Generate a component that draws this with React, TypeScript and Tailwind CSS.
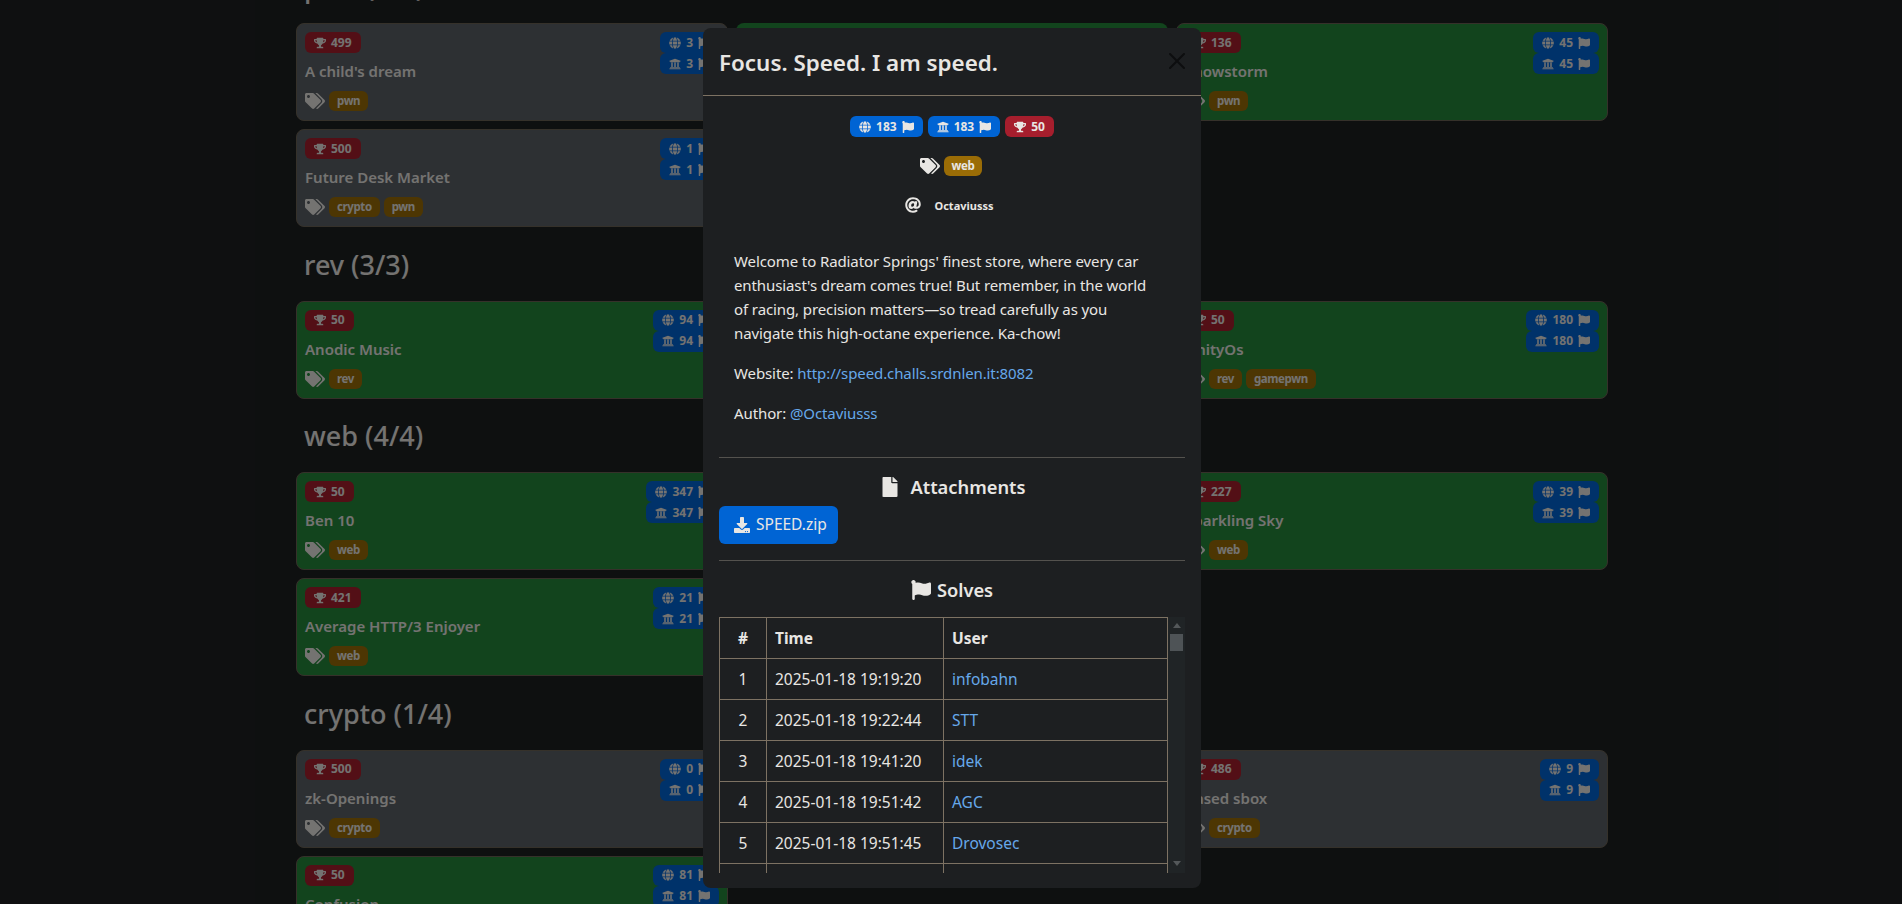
import { FaAt, FaDownload, FaFile, FaFlag, FaGlobe, FaTags, FaTrophy, FaUniversity } from 'react-icons/fa'

type Chall = {
  name: string
  points: number
  solves: number
  tags: string[]
  solved: boolean
}

type Section = {
  title: string
  cards: (Chall | { blank: true; solved: boolean })[]
}

// the middle column sits completely behind the modal, so those cards have no text
const sections: Section[] = [
  {
    title: 'pwn (3/4)',
    cards: [
      { name: "A child's dream", points: 499, solves: 3, tags: ['pwn'], solved: false },
      { blank: true, solved: true },
      { name: 'Snowstorm', points: 136, solves: 45, tags: ['pwn'], solved: true },
      { name: 'Future Desk Market', points: 500, solves: 1, tags: ['crypto', 'pwn'], solved: false },
    ],
  },
  {
    title: 'rev (3/3)',
    cards: [
      { name: 'Anodic Music', points: 50, solves: 94, tags: ['rev'], solved: true },
      { blank: true, solved: true },
      { name: 'UnityOs', points: 50, solves: 180, tags: ['rev', 'gamepwn'], solved: true },
    ],
  },
  {
    title: 'web (4/4)',
    cards: [
      { name: 'Ben 10', points: 50, solves: 347, tags: ['web'], solved: true },
      { blank: true, solved: true },
      { name: 'Sparkling Sky', points: 227, solves: 39, tags: ['web'], solved: true },
      { name: 'Average HTTP/3 Enjoyer', points: 421, solves: 21, tags: ['web'], solved: true },
    ],
  },
  {
    title: 'crypto (1/4)',
    cards: [
      { name: 'zk-Openings', points: 500, solves: 0, tags: ['crypto'], solved: false },
      { blank: true, solved: false },
      { name: 'Based sbox', points: 486, solves: 9, tags: ['crypto'], solved: false },
      { name: 'Confusion', points: 50, solves: 81, tags: ['crypto'], solved: true },
    ],
  },
]

const solves = [
  ['1', '2025-01-18 19:19:20', 'infobahn'],
  ['2', '2025-01-18 19:22:44', 'STT'],
  ['3', '2025-01-18 19:41:20', 'idek'],
  ['4', '2025-01-18 19:51:42', 'AGC'],
  ['5', '2025-01-18 19:51:45', 'Drovosec'],
  ['6', '2025-01-18 19:53:02', 'thehackerscrew'],
]

function Badge({ color, children }: { color: 'red' | 'blue'; children: React.ReactNode }) {
  return (
    <span
      className={`inline-flex h-[21px] items-center justify-between gap-[5px] rounded-[6px] px-[9px] text-xs font-bold text-[#e8e6e3] ${
        color === 'red' ? 'bg-[#a61e2d]' : 'bg-[#0064d4]'
      }`}
    >
      {children}
    </span>
  )
}

function Tag({ name }: { name: string }) {
  return (
    <span className="inline-flex h-5 items-center rounded-[6px] bg-[#9a6c06] px-2 text-[11.5px] font-bold tracking-[-0.4px] text-[#e8e6e3]">
      {name}
    </span>
  )
}

function Card({ chall }: { chall: Section['cards'][number] }) {
  const bg = chall.solved ? 'bg-[#24883a]' : 'bg-[#5a6066]'
  if ('blank' in chall) {
    return <div className={`h-[98px] rounded-lg ${bg}`} />
  }
  return (
    <div className={`flex h-[98px] justify-between rounded-lg border border-[#6b6254] p-2 ${bg}`}>
      <div className="flex flex-col items-start">
        <Badge color="red">
          <FaTrophy className="text-xs" />
          {chall.points}
        </Badge>
        <div className="mt-[8px] text-[15px] leading-[20px] font-semibold text-[#e8e6e3]">{chall.name}</div>
        <div className="mt-[10px] flex items-center gap-1">
          <FaTags className="text-[20px] text-[#e8e6e3]" />
          {chall.tags.map((t) => (
            <Tag key={t} name={t} />
          ))}
        </div>
      </div>
      <div className="flex flex-col items-stretch">
        <Badge color="blue">
          <FaGlobe className="text-xs" />
          <span>{chall.solves}</span>
          <FaFlag className="text-xs" />
        </Badge>
        <Badge color="blue">
          <FaUniversity className="text-xs" />
          <span>{chall.solves}</span>
          <FaFlag className="text-xs" />
        </Badge>
      </div>
    </div>
  )
}

function ChallengeList() {
  return (
    <div className="mt-[-50.5px] ml-[296px] flex w-[1312px] flex-col">
      {sections.map((s) => (
        <section key={s.title}>
          <h3 className="mt-[17.5px] mb-[16px] h-10 pl-2 text-[27px] leading-10 font-medium text-[#e8e6e3]">{s.title}</h3>
          <div className="grid grid-cols-3 gap-2">
            {s.cards.map((c, i) => (
              <Card key={i} chall={c} />
            ))}
          </div>
        </section>
      ))}
    </div>
  )
}

function ChallengeModal() {
  return (
    <div className="absolute top-7 left-[703px] flex h-[860px] w-[498px] flex-col overflow-hidden rounded-lg bg-[#1d1f21] text-[#e8e6e3]">
      <div className="relative flex h-[68px] shrink-0 items-center border-b border-[#7d7263] px-4">
        <h5 className="mt-[2px] text-[22.4px] font-semibold">Focus. Speed. I am speed.</h5>
        <svg className="absolute top-[25px] right-4 h-4 w-4 text-[#0d0e0f]" viewBox="0 0 16 16" fill="currentColor">
          <path d="M.293.293a1 1 0 0 1 1.414 0L8 6.586 14.293.293a1 1 0 1 1 1.414 1.414L9.414 8l6.293 6.293a1 1 0 0 1-1.414 1.414L8 9.414l-6.293 6.293a1 1 0 0 1-1.414-1.414L6.586 8 .293 1.707a1 1 0 0 1 0-1.414z" />
        </svg>
      </div>

      <div className="flex min-h-0 flex-1 flex-col px-4 pt-5">
        <div className="flex justify-center gap-[5px]">
          <Badge color="blue">
            <FaGlobe className="text-xs" />
            183
            <FaFlag className="text-xs" />
          </Badge>
          <Badge color="blue">
            <FaUniversity className="text-xs" />
            183
            <FaFlag className="text-xs" />
          </Badge>
          <Badge color="red">
            <FaTrophy className="text-xs" />
            50
          </Badge>
        </div>

        <div className="mt-[19px] ml-[-2px] flex items-center justify-center gap-1">
          <FaTags className="text-[20px]" />
          <Tag name="web" />
        </div>

        <div className="mt-[19px] ml-[-5px] flex items-center justify-center gap-[13px]">
          <FaAt className="text-[16px]" />
          <span className="mt-[3px] text-[11px] font-bold">Octaviusss</span>
        </div>

        <div className="mt-[34px] pr-[28px] pl-[15px] text-[15px] leading-6 tracking-[-0.1px]">
          <p>
            Welcome to Radiator Springs' finest store, where every car enthusiast's dream comes true! But remember, in
            the world of racing, precision matters—so tread carefully as you navigate this high-octane experience.
            Ka-chow!
          </p>
          <p className="mt-4">
            Website: <a className="text-[#66a8ea]">http://speed.challs.srdnlen.it:8082</a>
          </p>
          <p className="mt-4">
            Author: <a className="text-[#66a8ea]">@Octaviusss</a>
          </p>
        </div>

        <hr className="mt-[32px] border-[#54524e]" />
        <h5 className="mt-[14px] flex h-[30px] items-center justify-center gap-[10px] pl-[2px] text-[18.3px] font-semibold">
          <FaFile className="text-[20px]" />
          Attachments
        </h5>
        <a className="mt-[4px] flex h-[38px] w-[119px] items-center gap-[6px] rounded-md bg-[#0064d4] pl-[15px] text-[15.5px]">
          <FaDownload className="text-[16px]" />
          SPEED.zip
        </a>
        <hr className="mt-4 border-[#54524e]" />
        <h5 className="mt-[14px] flex h-[30px] items-center justify-center gap-[6px] text-[18.3px] font-semibold">
          <FaFlag className="text-[20px]" />
          Solves
        </h5>

        <div className="mt-[12px] flex h-[256px] overflow-hidden">
          <table className="h-fit w-[449px] shrink-0 table-fixed border-collapse text-[15.5px]">
            <colgroup>
              <col className="w-[47px]" />
              <col className="w-[177px]" />
              <col />
            </colgroup>
            <thead>
              <tr className="h-[41px]">
                <th className="border border-[#7d7263] pt-[2px] text-center font-bold">#</th>
                <th className="border border-[#7d7263] px-2 pt-[2px] text-left font-bold">Time</th>
                <th className="border border-[#7d7263] px-2 pt-[2px] text-left font-bold">User</th>
              </tr>
            </thead>
            <tbody>
              {solves.map(([n, time, user]) => (
                <tr key={n} className="h-[41px]">
                  <td className="border border-[#7d7263] pt-[2px] text-center">{n}</td>
                  <td className="border border-[#7d7263] px-2 pt-[2px]">{time}</td>
                  <td className="border border-[#7d7263] px-2 pt-[2px] text-[#66a8ea]">{user}</td>
                </tr>
              ))}
            </tbody>
          </table>
          <div className="flex w-[17px] shrink-0 flex-col items-center bg-[#202426]">
            <div className="mt-[6px] h-0 w-0 border-x-[4px] border-b-[5px] border-x-transparent border-b-[#54585a]" />
            <div className="mt-[6px] h-[17px] w-[13px] bg-[#4e5356]" />
            <div className="mt-auto mb-[7px] h-0 w-0 border-x-[4px] border-t-[5px] border-x-transparent border-t-[#54585a]" />
          </div>
        </div>
      </div>
    </div>
  )
}

export default function App() {
  return (
    <div className="relative h-[904px] overflow-hidden bg-[#1d2021] font-['Noto_Sans','Open_Sans',sans-serif]">
      <ChallengeList />
      <div className="absolute inset-0 bg-black/50" />
      <ChallengeModal />
    </div>
  )
}
